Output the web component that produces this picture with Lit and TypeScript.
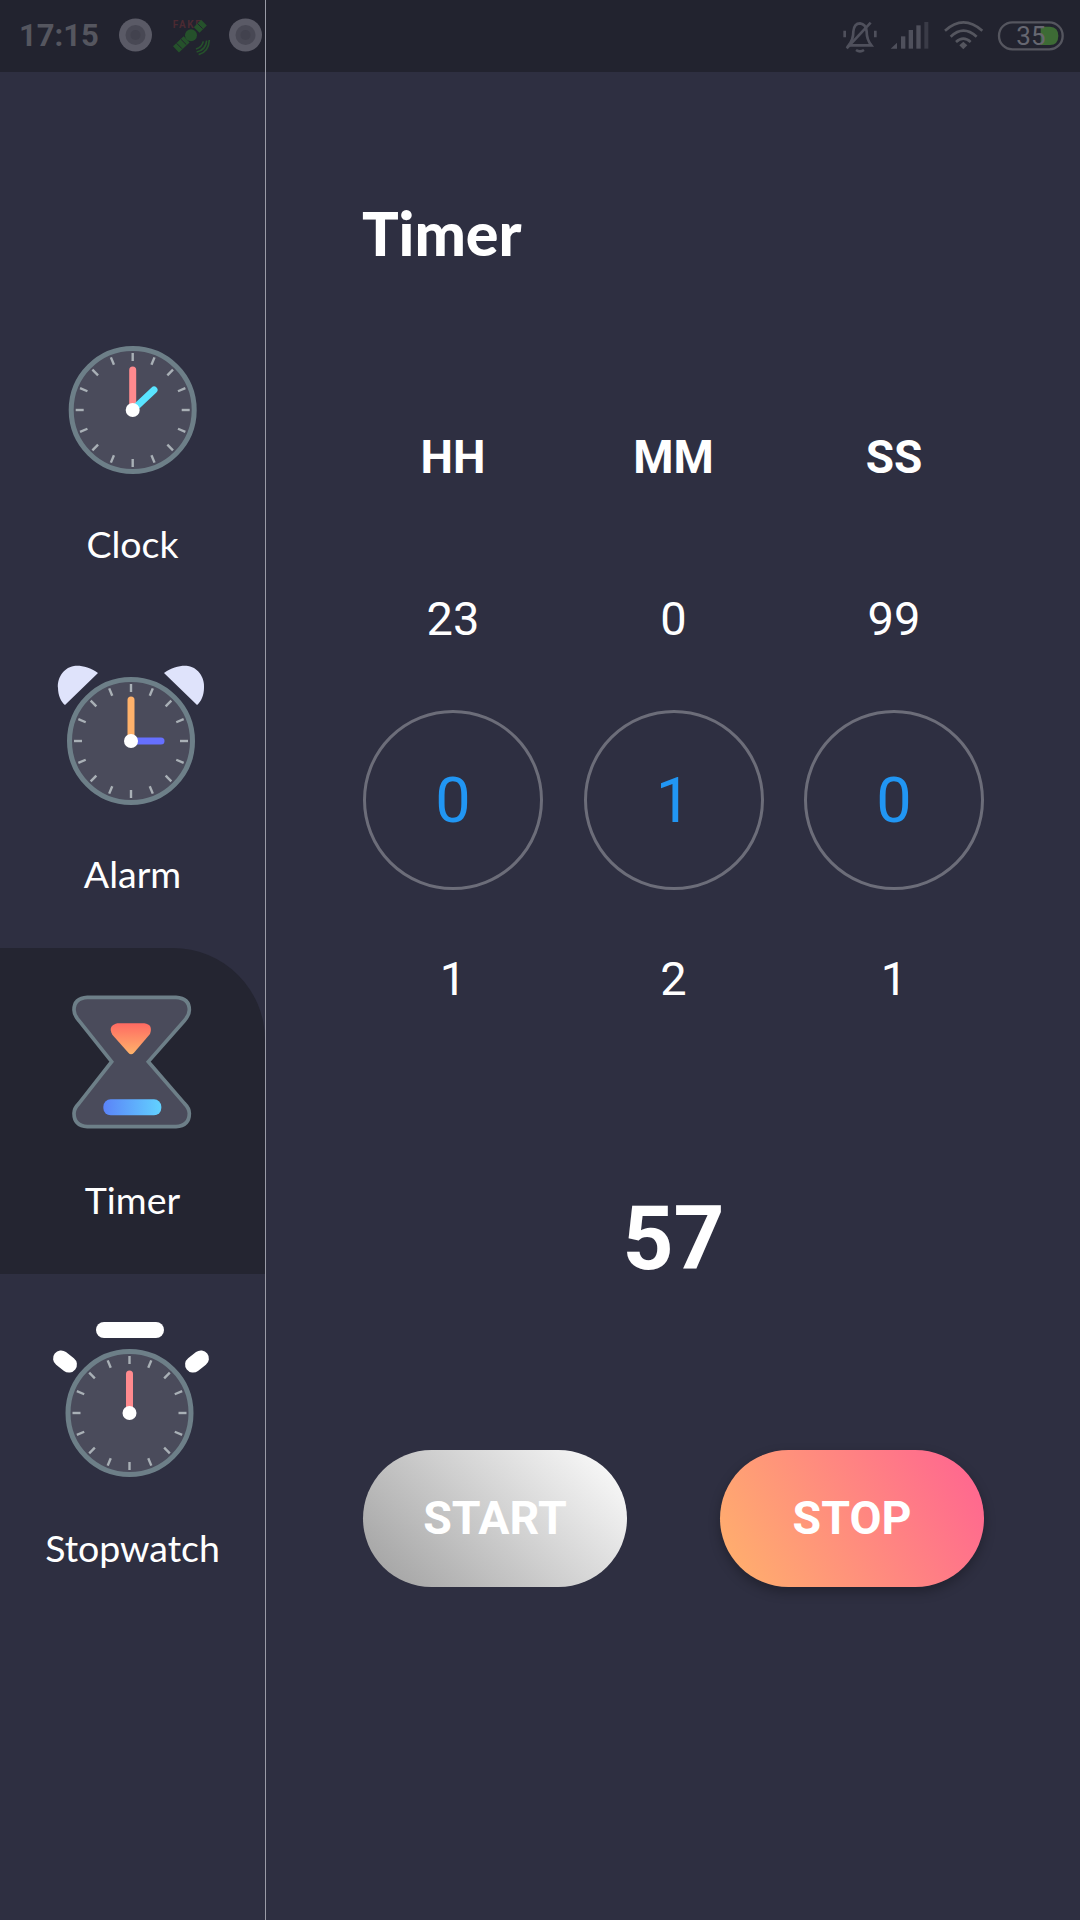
import { LitElement, html, css, svg } from "lit";
import { customElement } from "lit/decorators.js";

const FACE = "#4a4b5b";
const RIM = "#6d7f88";

function face(cx: number, cy: number) {
  const ticks = [];
  for (let i = 0; i < 16; i++) {
    const a = (i * 22.5 * Math.PI) / 180;
    const r1 = 57;
    const r2 = 49;
    ticks.push(
      svg`<line x1=${cx + Math.sin(a) * r1} y1=${cy - Math.cos(a) * r1} x2=${cx + Math.sin(a) * r2} y2=${cy - Math.cos(a) * r2} stroke="#a9b0b6" stroke-width="2.4" />`
    );
  }
  return svg`<circle cx=${cx} cy=${cy} r="61.5" fill=${FACE} stroke=${RIM} stroke-width="5" />${ticks}`;
}

function hand(x1: number, y1: number, x2: number, y2: number, color: string) {
  return svg`<line x1=${x1} y1=${y1} x2=${x2} y2=${y2} stroke=${color} stroke-width="7" stroke-linecap="round" />`;
}

@customElement("app-root")
export class AppRoot extends LitElement {
  static styles = css`
    :host {
      display: block;
      width: 1080px;
      height: 1920px;
      background: #2e2f41;
      overflow: hidden;
    }
    .status {
      display: flex;
      height: 72px;
      background: #22232f;
    }
    .status-left {
      box-sizing: border-box;
      width: 266px;
      display: flex;
      align-items: center;
      border-right: 1px solid #9a9ba6;
      padding-left: 19px;
    }
    .time {
      font: 700 31px/72px Roboto, sans-serif;
      color: #55565f;
      width: 81px;
    }
    .status-left svg {
      display: block;
      flex: none;
    }
    .status-right {
      flex: 1;
      display: flex;
      justify-content: flex-end;
    }
    .status-right svg {
      display: block;
    }
    .body {
      display: flex;
      height: 1848px;
    }
    .side {
      box-sizing: border-box;
      width: 266px;
      flex: none;
      border-right: 1px solid #9a9ba6;
      padding-top: 226px;
    }
    .item {
      display: flex;
      flex-direction: column;
      align-items: center;
      padding: 48px 0 53px;
    }
    .item.active {
      background: #242531;
      border-top-right-radius: 92px;
    }
    .item svg {
      display: block;
      overflow: visible;
    }
    .label {
      font: 400 37.5px/40px Lato, sans-serif;
      color: #fff;
      margin-top: 50px;
      height: 41px;
    }
    .main {
      flex: 1;
      padding-left: 97px;
    }
    .title {
      font: 900 61px/70px Lato, sans-serif;
      color: #fff;
      margin: 126px 0 0 -1px;
    }
    .cols {
      display: grid;
      grid-template-columns: repeat(3, 180px);
      column-gap: 40.5px;
      justify-items: center;
    }
    .heads {
      font: 700 46px/50px Roboto, sans-serif;
      color: #fff;
      margin-top: 164px;
    }
    .nums {
      font: 400 47px/50px Roboto, sans-serif;
      color: #fff;
    }
    .upper {
      margin-top: 112px;
    }
    .dials {
      margin-top: 66px;
    }
    .dial {
      box-sizing: border-box;
      width: 180px;
      height: 180px;
      border: 3px solid #6c6d79;
      border-radius: 50%;
      display: flex;
      align-items: center;
      justify-content: center;
      font: 400 63px/1 Roboto, sans-serif;
      color: #2196f3;
    }
    .lower {
      margin-top: 64px;
    }
    .count {
      width: 621px;
      text-align: center;
      font: 700 89px/100px Roboto, sans-serif;
      color: #fff;
      margin-top: 185px;
    }
    .buttons {
      display: flex;
      justify-content: space-between;
      width: 621px;
      margin-top: 161px;
    }
    .btn {
      width: 264px;
      height: 137px;
      border-radius: 68.5px;
      display: flex;
      align-items: center;
      justify-content: center;
      font: 700 46.5px/1 Roboto, sans-serif;
      color: #fff;
    }
    .start {
      background: linear-gradient(45deg, #9e9e9e, #ffffff);
    }
    .stop {
      background: linear-gradient(60deg, #ffb36b, #ff6292);
      box-shadow: 0 5px 12px rgba(0, 0, 0, 0.28);
    }
  `;

  render() {
    return html`
      <div class="status">
        <div class="status-left">
          <div class="time">17:15</div>
          <svg width="165" height="72" viewBox="100 0 165 72">
            <circle cx="135.5" cy="35" r="16.5" fill="#5a5a66" />
            <circle cx="135.5" cy="35" r="10" fill="#484854" />
            <circle cx="135.5" cy="35" r="5" fill="#42424e" />
            <g transform="scale(.3333)" fill="none">
              <text x="518" y="83" font-family="Roboto" font-weight="700" font-size="30" letter-spacing="5" fill="#4c2a32">FAKE</text>
              <line x1="528" y1="148" x2="560" y2="118" stroke="#25512b" stroke-width="26" />
              <line x1="590" y1="90" x2="612" y2="68" stroke="#25512b" stroke-width="24" />
              <path d="M530 130 L546 146 M543 118 L559 134 M592 70 L608 86" stroke="#22232f" stroke-width="3" />
              <circle cx="573" cy="106" r="18" fill="#25512b" />
              <path d="M588 147 Q606 142 610 124 M590 156 Q618 150 620 122 M596 164 Q626 156 628 120" stroke="#25512b" stroke-width="5" />
            </g>
            <circle cx="245.5" cy="35" r="16.5" fill="#5a5a66" />
            <circle cx="245.5" cy="35" r="10" fill="#484854" />
            <circle cx="245.5" cy="35" r="5" fill="#42424e" />
          </svg>
        </div>
        <div class="status-right">
          <svg width="280" height="72" viewBox="0 0 840 216">
            <g fill="none" stroke="#4f505c" stroke-width="8">
              <path d="M146 136 Q160 118 160 95 Q162 70 180 70 Q198 72 200 95 Q200 118 214 136 Z" />
              <line x1="140" y1="145" x2="212" y2="68" />
              <path d="M134 92 V112 M226 92 V112" />
              <path d="M168 150 Q180 158 192 150" />
            </g>
            <g fill="#4f505c">
              <path d="M272 146 L291 128 V146 Z" />
              <rect x="303" y="109" width="13" height="37" />
              <rect x="326" y="90" width="13" height="56" />
              <rect x="349" y="76" width="13" height="70" />
              <rect x="373" y="66" width="12" height="80" fill="#3a3b47" />
            </g>
            <g fill="none" stroke="#55565f" stroke-width="8">
              <path d="M435 92 Q490 42 547 92" />
              <path d="M452 110 Q490 74 530 110" />
              <path d="M468 126 Q490 106 512 126" />
            </g>
            <path d="M478 136 L490 125 L502 136 L490 148 Z" fill="#55565f" />
            <rect x="597" y="67" width="191" height="81" rx="40" fill="none" stroke="#55565f" stroke-width="7" />
            <path d="M722 80 H750 Q775 82 775 107 Q775 134 750 135 H722 Z" fill="#3d6b35" />
            <text x="649" y="134" font-family="Roboto" font-weight="400" font-size="78" fill="#666771">35</text>
          </svg>
        </div>
      </div>
      <div class="body">
        <div class="side">
          <div class="item">
            <svg width="165" height="128" viewBox="50 346 165 128">
              ${face(132.7, 410)}
              ${hand(132.7, 410, 132.7, 370, "#ff8a8e")}
              ${hand(132.7, 410, 154, 390, "#5ae4ff")}
              <circle cx="132.7" cy="410" r="7" fill="#fff" />
            </svg>
            <div class="label">Clock</div>
          </div>
          <div class="item">
            <svg width="165" height="138" viewBox="50 666 165 138">
              <path d="M98 673 C90 667 80 665 74 666 C62 668 57 680 58 688 C58 695 61 702 65 705 Z" fill="#dfe3fb" />
              <path d="M164 673 C172 667 182 665 188 666 C200 668 205 680 204 688 C204 695 201 702 197 705 Z" fill="#dfe3fb" />
              ${face(131, 741)}
              ${hand(131, 741, 131, 700, "#ffb26b")}
              ${hand(131, 741, 161, 741, "#6670ff")}
              <circle cx="131" cy="741" r="7" fill="#fff" />
            </svg>
            <div class="label">Alarm</div>
          </div>
          <div class="item active">
            <svg width="165" height="134" viewBox="50 996 165 134">
              <defs>
                <linearGradient id="sand" x1="0" y1="0" x2="0" y2="1">
                  <stop offset="0" stop-color="#ff6a62" />
                  <stop offset="1" stop-color="#ffb36b" />
                </linearGradient>
                <linearGradient id="base" x1="0" y1="0" x2="1" y2="0">
                  <stop offset="0" stop-color="#5b83f8" />
                  <stop offset="1" stop-color="#62d2ff" />
                </linearGradient>
              </defs>
              <g transform="translate(0 930) scale(.33333)">
                <path d="M262 202 H528 Q568 204 568 240 Q568 255 553 272 L445 395 L553 520 Q568 535 568 550 Q568 588 528 590 H262 Q222 588 222 550 Q222 535 237 520 L335 395 L237 272 Q222 255 222 240 Q222 204 262 202 Z" fill=${FACE} stroke=${RIM} stroke-width="11" />
                <path d="M352 280 H433 Q460 284 450 312 L402 368 Q393 377 385 368 L337 314 Q322 288 352 280 Z" fill="url(#sand)" />
                <rect x="310" y="508" width="174" height="48" rx="22" fill="url(#base)" />
              </g>
            </svg>
            <div class="label">Timer</div>
          </div>
          <div class="item">
            <svg width="165" height="156" viewBox="50 1322 165 156">
              <rect x="96" y="1322" width="68" height="16" rx="8" fill="#fff" />
              <rect x="52" y="1353.5" width="26" height="16" rx="8" fill="#fff" transform="rotate(38 65 1361.5)" />
              <rect x="184" y="1353.5" width="26" height="16" rx="8" fill="#fff" transform="rotate(-38 197 1361.5)" />
              ${face(129.5, 1413)}
              ${hand(129.5, 1413, 129.5, 1374, "#ff8a8e")}
              <circle cx="129.5" cy="1413" r="7" fill="#fff" />
            </svg>
            <div class="label">Stopwatch</div>
          </div>
        </div>
        <div class="main">
          <div class="title">Timer</div>
          <div class="cols heads"><span>HH</span><span>MM</span><span>SS</span></div>
          <div class="cols nums upper"><span>23</span><span>0</span><span>99</span></div>
          <div class="cols dials">
            <div class="dial">0</div>
            <div class="dial">1</div>
            <div class="dial">0</div>
          </div>
          <div class="cols nums lower"><span>1</span><span>2</span><span>1</span></div>
          <div class="count">57</div>
          <div class="buttons">
            <div class="btn start">START</div>
            <div class="btn stop">STOP</div>
          </div>
        </div>
      </div>
    `;
  }
}
